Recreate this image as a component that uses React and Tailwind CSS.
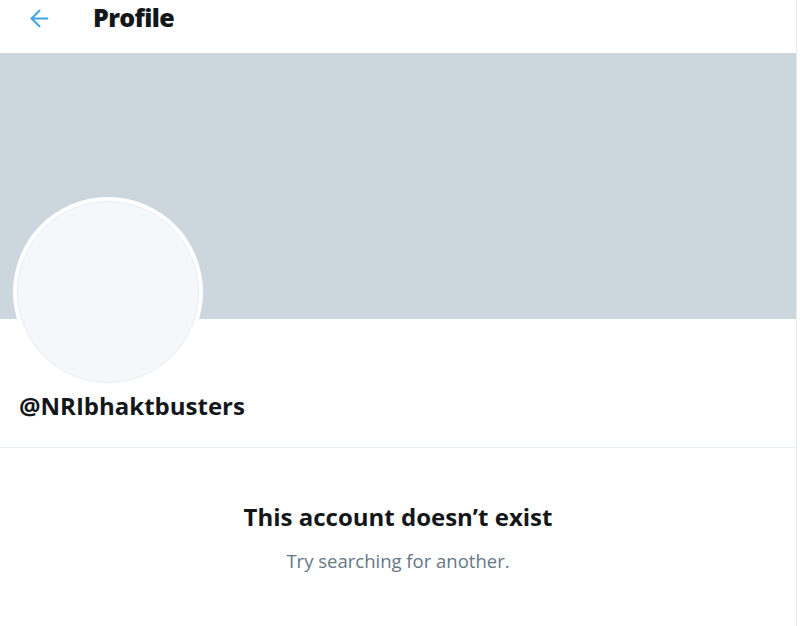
import { ArrowLeft } from 'lucide-react';

const App = () => {
  return (
    <div className="w-[800px] h-[626px] bg-white overflow-hidden font-['Open_Sans',sans-serif]">
      <div className="w-[797px] h-full border-r border-[#e6ecf0] flex flex-col">
        <header className="h-[53px] flex items-center px-[26px]">
          <ArrowLeft className="w-[27px] h-[27px] text-[#3ba3e6] -mt-[17px]" strokeWidth={1.8} />
          <h1 className="ml-[40px] -mt-[17px] text-[25px] font-extrabold text-[#14171a] tracking-tight">Profile</h1>
        </header>

        <div className="h-[266px] bg-[#ccd6dd]" />

        <div className="px-[13px]">
          <div className="-mt-[122px] w-[190px] h-[190px] rounded-full bg-white p-[4px]">
            <div className="w-full h-full rounded-full bg-[#f5f8fa] border border-[#e6ecf0]" />
          </div>
          <div className="mt-[4px] pl-[6px] text-[24px] font-bold text-[#14171a] leading-[30px]">@NRIbhaktbusters</div>
        </div>

        <div className="mt-[26px] border-b border-[#e6ecf0]" />

        <div className="flex flex-col items-center pt-[54px]">
          <div className="text-[24px] font-bold text-[#14171a] leading-[30px]">This account doesn’t exist</div>
          <div className="mt-[17px] text-[18.5px] text-[#657786] leading-[24px]">Try searching for another.</div>
        </div>
      </div>
    </div>
  );
};

export default App;
